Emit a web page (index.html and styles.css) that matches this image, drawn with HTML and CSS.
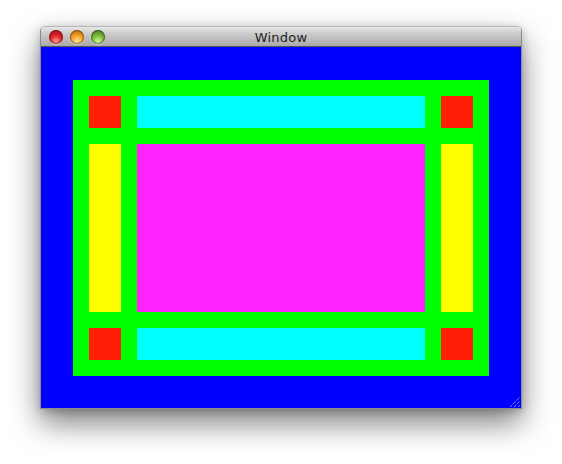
FILE: index.html
```html
<!DOCTYPE html>
<html>
<head>
<meta charset="utf-8">
<title>Window</title>
<link rel="stylesheet" href="styles.css">
</head>
<body>
<div class="window">
  <div class="titlebar">
    <div class="lights">
      <span class="light red"></span>
      <span class="light orange"></span>
      <span class="light green"></span>
    </div>
    <div class="title">Window</div>
  </div>
  <div class="content">
    <div class="frame">
      <div class="cell red-box"></div>
      <div class="cell cyan-box"></div>
      <div class="cell red-box"></div>
      <div class="cell yellow-box"></div>
      <div class="cell magenta-box"></div>
      <div class="cell yellow-box"></div>
      <div class="cell red-box"></div>
      <div class="cell cyan-box"></div>
      <div class="cell red-box"></div>
    </div>
    <svg class="grip" width="12" height="12" viewBox="0 0 12 12">
      <line x1="1" y1="11" x2="11" y2="1" stroke="#c8c8e8" stroke-width="1" stroke-dasharray="1 1"/>
      <line x1="5" y1="11" x2="11" y2="5" stroke="#c8c8e8" stroke-width="1" stroke-dasharray="1 1"/>
      <line x1="9" y1="11" x2="11" y2="9" stroke="#c8c8e8" stroke-width="1" stroke-dasharray="1 1"/>
    </svg>
  </div>
</div>
</body>
</html>
```
FILE: styles.css
```css
html, body {
  margin: 0;
  padding: 0;
  background: #ffffff;
}
body {
  box-sizing: border-box;
  min-height: 464px;
  padding: 26px 0 0 40px;
  font-family: "DejaVu Sans", "Liberation Sans", sans-serif;
}
.window {
  width: 480px;
  border: 1px solid #8c8c8c;
  border-top-color: #b8b8b8;
  border-radius: 5px 5px 0 0;
  box-shadow: 0 14px 30px rgba(0, 0, 0, 0.5), 0 2px 8px rgba(0, 0, 0, 0.2);
  overflow: hidden;
}
.titlebar {
  position: relative;
  height: 19px;
  display: flex;
  align-items: center;
  justify-content: center;
  background: linear-gradient(#e6e6e6 0%, #cfcfcf 30%, #a9a9a9 100%);
  border-bottom: 1px solid #555555;
}
.lights {
  position: absolute;
  left: 8px;
  top: 3px;
  display: flex;
  gap: 7px;
}
.light {
  width: 14px;
  height: 14px;
  border-radius: 50%;
  box-shadow: inset 0 0 0 1px rgba(0, 0, 0, 0.35), 0 1px 0 rgba(255, 255, 255, 0.4);
}
.light.red {
  background: radial-gradient(circle at 50% 80%, #ff9a8f 0%, #e0222a 45%, #9a0a10 100%);
}
.light.orange {
  background: radial-gradient(circle at 50% 80%, #ffe89a 0%, #f2a022 45%, #a65a06 100%);
}
.light.green {
  background: radial-gradient(circle at 50% 80%, #d8f59a 0%, #76b83a 45%, #3b6e14 100%);
}
.title {
  font-size: 13px;
  color: #1e1e1e;
  letter-spacing: 0.2px;
  padding-top: 1px;
}
.content {
  position: relative;
  background: #0000ff;
  padding: 33px 32px 32px 32px;
}
.frame {
  background: #00ff00;
  padding: 16px;
  display: grid;
  grid-template-columns: 32px 288px 32px;
  grid-template-rows: 32px 168px 32px;
  gap: 16px;
}
.red-box { background: #ff1f08; }
.cyan-box { background: #00ffff; }
.yellow-box { background: #ffff00; }
.magenta-box { background: #ff22ff; }
.grip {
  position: absolute;
  right: 0;
  bottom: 0;
}
```
